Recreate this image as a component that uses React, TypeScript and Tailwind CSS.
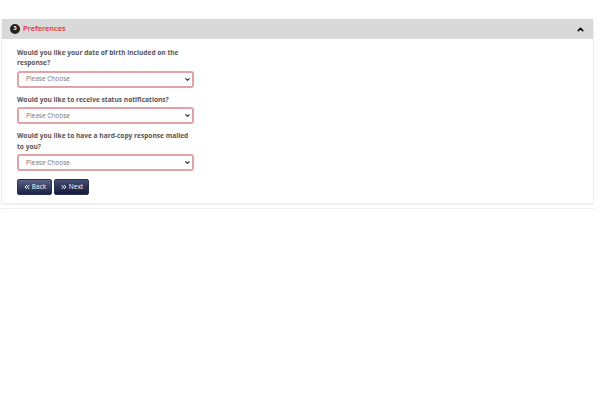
import { ChevronDown, ChevronUp, ChevronsLeft, ChevronsRight } from "lucide-react";

const questions = [
    { label: "Would you like your date of birth included on the response?", gap: "mb-[7px]" },
    { label: "Would you like to receive status notifications?", gap: "mb-[7px]" },
    { label: "Would you like to have a hard-copy response mailed to you?", gap: "mb-[8px]" },
];

function Question({ label, gap }: { label: string; gap: string }) {
    return (
        <div className={gap}>
            <p className="w-[177px] text-[6.6px] leading-[10.5px] font-bold text-[#555] mb-[2px]">{label}</p>
            <div className="w-[177px] h-[17px] flex items-center justify-between pl-[7px] pr-[1px] bg-white border-2 border-[#e2a3a7] rounded-[3px]">
                <span className="text-[6.5px] text-[#777]">Please Choose</span>
                <ChevronDown className="w-[7px] h-[7px] text-[#333]" strokeWidth={4} />
            </div>
        </div>
    );
}

export default function App() {
    return (
        <div className="w-[600px] h-[400px] bg-white pt-[19px] pl-[1px] pr-[6px] font-['Open_Sans',sans-serif]">
            <div className="rounded-[3px] border-b-2 border-r border-l border-[#f0f0f0]">
                <div className="h-[20px] bg-[#d9d9d9] flex items-center justify-between pl-[8px] pr-[8px]">
                    <div className="flex items-center gap-[3px]">
                        <span className="w-[10px] h-[10px] rounded-full bg-[#222] text-white text-[6px] font-bold flex items-center justify-center">3</span>
                        <span className="text-[7.4px] font-semibold text-[#d9303a]">Preferences</span>
                    </div>
                    <ChevronUp className="w-[9px] h-[9px] text-black" strokeWidth={4} />
                </div>
                <div className="pt-[8.5px] pl-[15px] pb-[8px]">
                    {questions.map((q) => (
                        <Question key={q.label} label={q.label} gap={q.gap} />
                    ))}
                    <div className="flex gap-[2px]">
                        <button className="w-[35px] h-[16px] flex items-center justify-center gap-[1px] rounded-[2px] border border-[#2a3052] bg-gradient-to-b from-[#5a6285] to-[#1d2348] text-white text-[6.5px]">
                            <ChevronsLeft className="w-[8px] h-[8px]" strokeWidth={3} />
                            Back
                        </button>
                        <button className="w-[35px] h-[16px] flex items-center justify-center gap-[1px] rounded-[2px] border border-[#2a3052] bg-gradient-to-b from-[#454d72] to-[#141a3d] text-white text-[6.5px]">
                            <ChevronsRight className="w-[8px] h-[8px]" strokeWidth={3} />
                            Next
                        </button>
                    </div>
                </div>
            </div>
            <div className="mt-[3px] h-px bg-[#efefef]" />
        </div>
    );
}
